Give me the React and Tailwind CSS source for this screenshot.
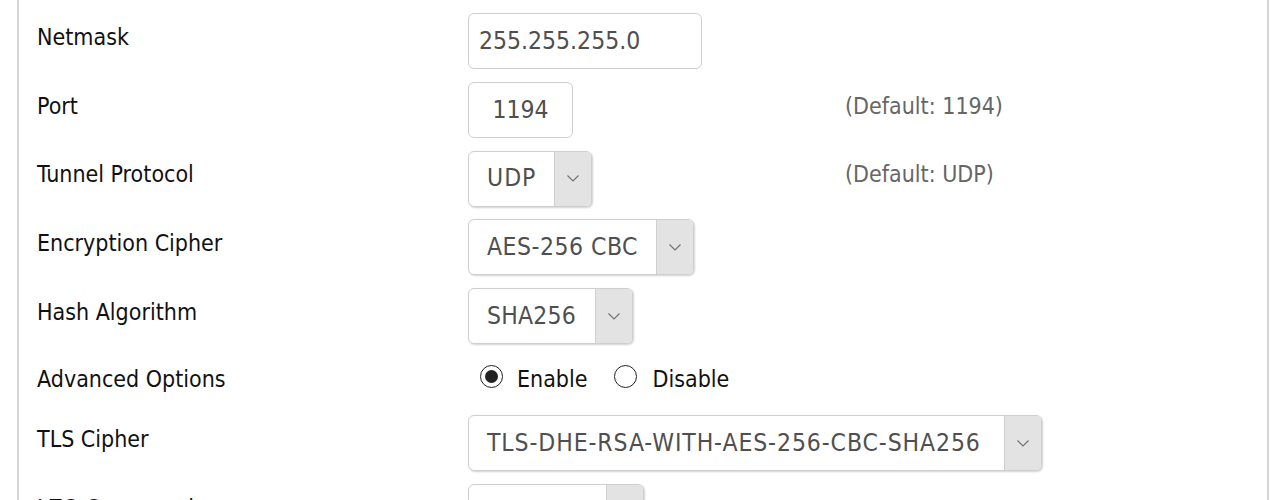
import React from "react";

const FONT = { fontFamily: '"DejaVu Sans Condensed", "DejaVu Sans", sans-serif' };

function Chevron() {
  return (
    <svg width="12" height="7" viewBox="0 0 12 7" fill="none">
      <polyline points="0.5,0.5 6,6 11.5,0.5" stroke="#707070" strokeWidth="1.1" />
    </svg>
  );
}

function Select({ value, textW, track }) {
  return (
    <div className="flex shrink-0 h-[56px] rounded-[6px] border border-[#cfcfcf] overflow-hidden bg-white shadow-[1px_1px_2px_rgba(0,0,0,0.18)]">
      <div className={`${textW} ${track} shrink-0 flex items-center pl-[18px] text-[24.5px] text-[#4f4f4f] whitespace-nowrap`}>{value}</div>
      <div className="w-[37px] shrink-0 flex items-center justify-center bg-[#e3e3e3] border-l border-[#cfcfcf]">
        <Chevron />
      </div>
    </div>
  );
}

function Input({ value, w, center }) {
  return (
    <div
      className={`${w} shrink-0 h-[56px] rounded-[6px] border border-[#cfcfcf] bg-white flex items-center ${center ? "justify-center" : "pl-[10px]"} text-[24.5px] text-[#4f4f4f]`}
    >
      {value}
    </div>
  );
}

function Row({ label, children, hint }) {
  return (
    <div className="flex items-center h-[68.75px] shrink-0">
      <div className="w-[431px] shrink-0 pb-[8px] text-[23px] text-[#111] whitespace-nowrap">{label}</div>
      <div className="min-w-[377px] shrink-0 flex items-center">{children}</div>
      {hint && <div className="pb-[8px] text-[23px] text-[#666] whitespace-nowrap">{hint}</div>}
    </div>
  );
}

function Radio({ checked }) {
  return (
    <div className="w-[23px] h-[23px] rounded-full border-[1.6px] border-[#222] flex items-center justify-center mb-[6px]">
      {checked && <div className="w-[13px] h-[13px] rounded-full bg-[#222]" />}
    </div>
  );
}

export default function App() {
  return (
    <div className="w-[1280px] h-[500px] overflow-hidden bg-white" style={FONT}>
      <div className="ml-[17px] w-[1252px] h-[600px] border-x-2 border-[#d6d6d6] flex flex-col pl-[18px] mt-[-62px]">
        <Row label="">
          <Input value="" w="w-[234px]" />
        </Row>
        <Row label="Netmask">
          <Input value="255.255.255.0" w="w-[234px]" />
        </Row>
        <Row label="Port" hint="(Default: 1194)">
          <Input value="1194" w="w-[105px]" center />
        </Row>
        <Row label="Tunnel Protocol" hint="(Default: UDP)">
          <Select value="UDP" textW="w-[85px]" track="tracking-[1px]" />
        </Row>
        <Row label="Encryption Cipher">
          <Select value="AES-256 CBC" textW="w-[187px]" track="tracking-[0.5px]" />
        </Row>
        <Row label="Hash Algorithm">
          <Select value="SHA256" textW="w-[126px]" track="tracking-[0.2px]" />
        </Row>
        <div className="flex items-center h-[58.2px] shrink-0">
          <div className="w-[431px] shrink-0 text-[23px] text-[#111] whitespace-nowrap">Advanced Options</div>
          <div className="flex items-center text-[23px] text-[#111]">
            <div className="ml-[12px]">
              <Radio checked />
            </div>
            <span className="ml-[14px]">Enable</span>
            <div className="ml-[26px]">
              <Radio />
            </div>
            <span className="ml-[16px]">Disable</span>
          </div>
        </div>
        <Row label="TLS Cipher">
          <Select value="TLS-DHE-RSA-WITH-AES-256-CBC-SHA256" textW="w-[535px]" track="tracking-[0.9px]" />
        </Row>
        <Row label="LZO Compression">
          <Select value="Adaptive" textW="w-[137px]" track="tracking-[0px]" />
        </Row>
      </div>
    </div>
  );
}
